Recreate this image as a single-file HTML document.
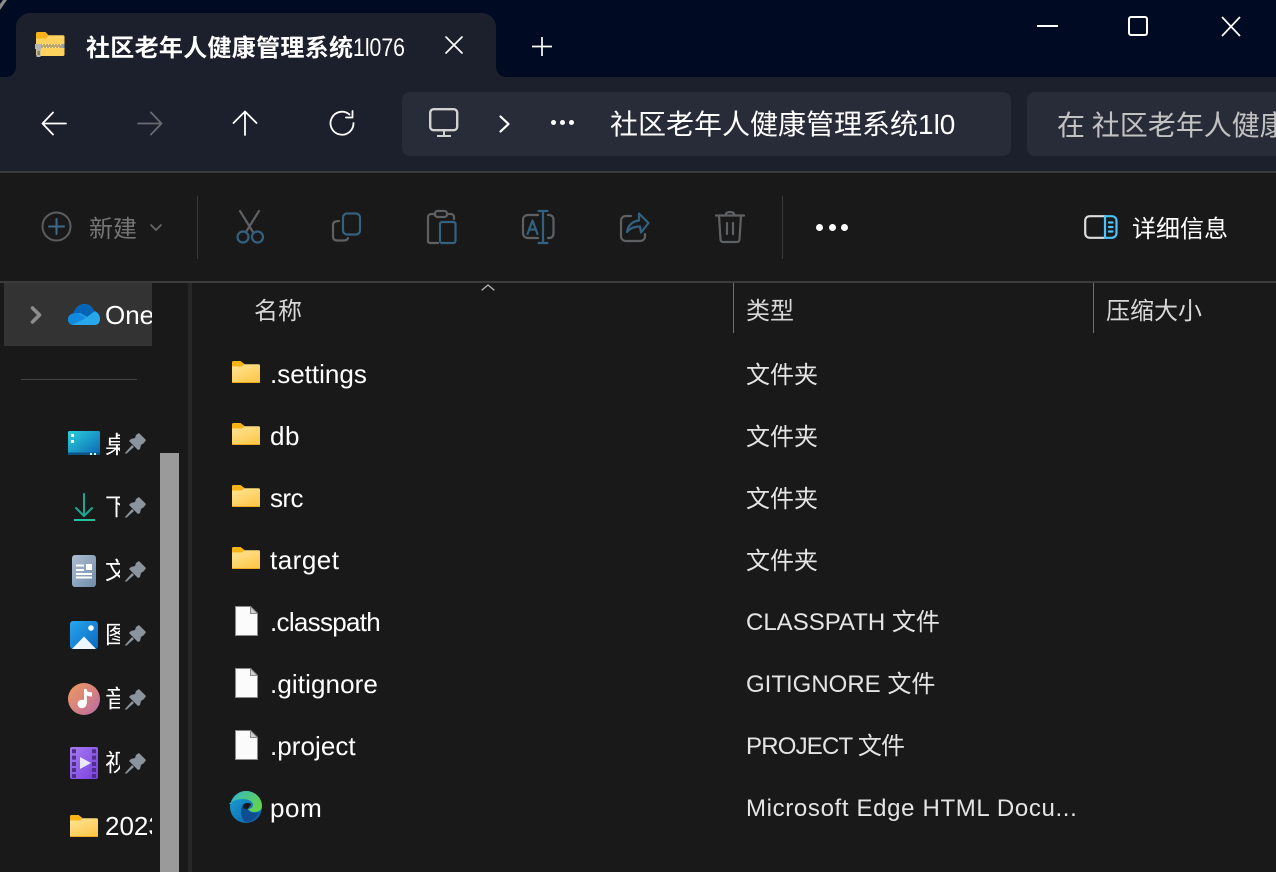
<!DOCTYPE html>
<html lang="zh"><head><meta charset="utf-8"><title>社区老年人健康管理系统1l076</title>
<style>
html,body{margin:0;padding:0;background:#191919}
#r{position:relative;width:1276px;height:872px;overflow:hidden;background:#191919;font-family:"Liberation Sans","Noto Sans CJK SC",sans-serif;color:#fff}
.a{position:absolute}
.t{position:absolute;white-space:nowrap;line-height:36px;height:36px}
.n{left:270px;font-size:26px;color:#fff}
.y{left:746px;font-size:24px;color:#e4e4e4}
.c{font-size:24px;color:#d8d8d8;top:294px}
svg{position:absolute;overflow:visible}
.s{fill:none;stroke-linecap:round;stroke-linejoin:round}
</style></head><body><div id="r">
<svg width="0" height="0" style="left:0;top:0"><defs>
<linearGradient id="fg" x1="0" y1="0" x2=".6" y2="1"><stop offset="0" stop-color="#ffe596"/><stop offset="1" stop-color="#fdc94f"/></linearGradient>
<symbol id="folder" viewBox="0 0 28 22"><path d="M0 4.500A1.500 1.500 0 0 1 1.500 3.200h25A1.500 1.500 0 0 1 28 4.700v15.800a1.500 1.500 0 0 1-1.500 1.500h-25A1.500 1.500 0 0 1 0 20.500z" fill="url(#fg)"/><path d="M0 1.500A1.500 1.500 0 0 1 1.500 0h7l4 3-2.500 2.500H0z" fill="#f8b417"/><path d="M0 21h28v.5a.5.5 0 0 1-.5.5H.5a.5.5 0 0 1-.5-.5z" fill="#eda81f"/></symbol>
<symbol id="file" viewBox="0 0 23 30"><path d="M.5.500h15l7 7v22H.5z" fill="#fbfbfb" stroke="#8a8a8a"/><path d="M15.500.500v7h7z" fill="#d0d0d0" stroke="#8a8a8a"/></symbol>
<symbol id="pin" viewBox="0 0 21 21"><path d="M11 2l3-2 7 7-2 3-3 2-1 4-2 1-9-9 2-2 4-1z" fill="#8b949c"/><path d="M7 12L0 20l1 1 8-7z" fill="#8b949c"/></symbol>
</defs></svg>

<!-- title bar -->
<div class="a" style="left:0;top:0;width:1276px;height:77px;background:#000a22"></div>
<!-- nav band -->
<div class="a" style="left:0;top:77px;width:1276px;height:94px;background:#1c202c"></div>
<!-- tab -->
<div class="a" style="left:16px;top:13px;width:480px;height:64px;background:#1c202c;border-radius:14px 14px 0 0"></div>
<svg width="12" height="12" style="left:4px;top:65px"><path d="M12 0v12H0c8 0 12-4 12-12z" fill="#1c202c"/></svg>
<svg width="12" height="12" style="left:496px;top:65px"><path d="M0 0v12h12C4 12 0 8 0 0z" fill="#1c202c"/></svg>

<!-- tab icon -->
<svg width="30" height="26" viewBox="0 0 30 26" style="left:35px;top:32px">
<path d="M1 4.500A1.500 1.500 0 0 1 2.500 3.200h25.500a1.500 1.500 0 0 1 1.500 1.500v17.800a1.500 1.500 0 0 1-1.500 1.500H2.500A1.500 1.500 0 0 1 1 22.500z" fill="#fdd25f"/>
<path d="M1 1.500A1.500 1.500 0 0 1 2.500 0h8l3 3.200-2 3.300H1z" fill="#f9b31a"/>
<rect x="5" y="12" width="24" height="4" fill="#bfa765"/><path d="M7 12h1v1H7zm3 0h1v1h-1zm3 0h1v1h-1zm3 0h1v1h-1zm3 0h1v1h-1zm3 0h1v1h-1zm3 0h1v1h-1zm-17 3h1v1H8zm3 0h1v1h-1zm3 0h1v1h-1zm3 0h1v1h-1zm3 0h1v1h-1zm3 0h1v1h-1z" fill="#f0e8c8"/>
<rect x="26.500" y="12" width="3" height="4" fill="#8fa0a8"/>
<path d="M0 12h6v5H5.500v8h-4v-8H0z" fill="#b4b4b0"/><rect x="2.500" y="19" width="2.500" height="4" fill="#7e7e7a"/>
</svg>
<div class="t" style="left:86px;top:30px;font-size:24px;font-weight:700;letter-spacing:.3px;width:320px">社区老年人健康管理系统<span style="display:inline-block;font-weight:400;letter-spacing:0;font-size:25px;transform:scaleX(.85);transform-origin:0 50%">1l076</span></div>
<svg class="s" width="18" height="18" style="left:445px;top:36px" stroke="#fff" stroke-width="1.7"><path d="M1 1l16 16M17 1L1 17"/></svg>
<svg class="s" width="20" height="20" style="left:532px;top:37px" stroke="#fff" stroke-width="1.7"><path d="M10 0v19M0 9.500h20" stroke-linecap="butt"/></svg>

<!-- window controls -->
<div class="a" style="left:1037px;top:25px;width:21px;height:2px;background:#fff"></div>
<div class="a" style="left:1128px;top:16px;width:16px;height:16px;border:2px solid #fff;border-radius:3px"></div>
<svg class="s" width="20" height="20" style="left:1221px;top:16px" stroke="#fff" stroke-width="1.7"><path d="M1 1l18 19M19 1L1 20" stroke-linecap="butt"/></svg>
<svg width="10" height="12" style="left:0;top:0"><path d="M0 10L7 0H3L0 4z" fill="#8a8a8a"/></svg>

<!-- nav icons -->
<svg class="s" width="26" height="24" style="left:41px;top:111px" stroke="#fff" stroke-width="1.8"><path d="M25 12.500H2M12 1.500L1.500 12.500 12 23.500"/></svg>
<svg class="s" width="26" height="24" style="left:137px;top:111px" stroke="#686a70" stroke-width="1.8"><path d="M1 12.500h23M14 1.500l10.500 11L14 23.500"/></svg>
<svg class="s" width="26" height="26" style="left:232px;top:110px" stroke="#fff" stroke-width="1.8"><path d="M13 25V2M1.500 13L13 1.500 24.500 13"/></svg>
<svg class="s" width="26" height="26" style="left:329px;top:110px" stroke="#fff" stroke-width="1.8"><path d="M20.500 4.500A11.500 11.500 0 1 0 24.500 13M23.500 1v6.500H17"/></svg>

<!-- address -->
<div class="a" style="left:402px;top:92px;width:609px;height:64px;background:#282c38;border-radius:8px"></div>
<div class="a" style="left:1027px;top:92px;width:260px;height:64px;background:#282c38;border-radius:8px"></div>
<svg class="s" width="30" height="30" style="left:429px;top:108px" stroke="#d2d2d2" stroke-width="2.400"><rect x="1.200" y="1.200" width="27" height="21" rx="3.500"/><path d="M15 22.500v5M8 28h14" stroke-width="2" stroke-linecap="butt"/></svg>
<svg class="s" width="12" height="20" style="left:499px;top:115px" stroke="#fff" stroke-width="2.200"><path d="M1.500 1.500L9.500 9 1.500 16.500"/></svg>
<div class="a" style="left:551px;top:120px;width:5px;height:5px;border-radius:50%;background:#fff"></div>
<div class="a" style="left:560px;top:120px;width:5px;height:5px;border-radius:50%;background:#fff"></div>
<div class="a" style="left:569px;top:120px;width:5px;height:5px;border-radius:50%;background:#fff"></div>
<div class="t" style="left:610px;top:106px;font-size:28px;line-height:38px;height:38px;color:#fff">社区老年人健康管理系统<span style="font-size:28px">1l0</span></div>
<div class="a" style="left:1057px;top:107px;width:219px;height:40px;overflow:hidden"><div class="t" style="left:0;top:0;font-size:28px;line-height:38px;height:38px;color:#c2c2c2;word-spacing:-1px">在 社区老年人健康管理系统</div></div>

<!-- command bar -->
<div class="a" style="left:0;top:171px;width:1276px;height:2px;background:#3c3c3c"></div>
<div class="a" style="left:0;top:281px;width:1276px;height:2px;background:#3c3c3c"></div>
<svg class="s" width="32" height="32" style="left:41px;top:211px" stroke="#5a5d60" stroke-width="2"><circle cx="15.500" cy="15.500" r="14"/><path d="M15.500 8v15M8 15.500h15" stroke="#3d6a86"/></svg>
<div class="t" style="left:89px;top:212px;font-size:24px;color:#747474">新建</div>
<svg class="s" width="12" height="8" style="left:150px;top:224px" stroke="#6a6a6a" stroke-width="1.600"><path d="M1 1l5 5 5-5"/></svg>
<div class="a" style="left:197px;top:196px;width:1px;height:63px;background:#3a3a3a"></div>
<svg class="s" width="30" height="34" style="left:235px;top:210px" stroke-width="2.200"><path d="M5 1l13 21M24 1L11 22" stroke="#5e6063"/><circle cx="8" cy="27" r="5.500" stroke="#33617f"/><circle cx="22.500" cy="27" r="5.500" stroke="#33617f"/></svg>
<svg class="s" width="30" height="34" style="left:332px;top:212px" stroke-width="2.200"><path d="M7 9C3 9 1 10.500 1 13v11c0 3 1.500 4.500 4 4.500h7c2 0 3.500-1 4-2.500" stroke="#5e6063"/><rect x="11" y="1.500" width="17" height="21" rx="4" stroke="#33617f"/></svg>
<svg class="s" width="30" height="34" style="left:427px;top:210px" stroke-width="2.200"><path d="M8 4H4C2.500 4 1 5.500 1 7v24c0 1.500 1 2 2.500 2H11" stroke="#5e6063"/><path d="M20 4h4c1.500 0 3 1.500 3 3v2" stroke="#5e6063"/><rect x="8" y="1" width="12" height="6" rx="2.500" stroke="#5e6063"/><rect x="13" y="12" width="15.500" height="21" rx="2" stroke="#33617f"/></svg>
<svg class="s" width="34" height="34" style="left:522px;top:210px" stroke-width="2.200"><path d="M16 5H6C3 5 1 7 1 10v13c0 3 2 5 5 5h10M26 5h1c3 0 4.500 2 4.500 5v13c0 3-1.500 5-4.500 5h-1" stroke="#5e6063"/><path d="M16.500 1h9M21 1v32M16.500 33h9" stroke="#33617f"/><path d="M5.500 24L10.500 10.500l5 13.500M7.500 19.500h6" stroke="#33617f"/></svg>
<svg class="s" width="34" height="32" style="left:620px;top:212px" stroke-width="2.200"><path d="M11 4H6C3 4 1 6 1 9v15c0 3 2 5 5 5h14c3 0 5-2 5-5v-2" stroke="#5e6063"/><path d="M7 20c1-7 6-11 12-11.500V1.500l9.500 9.500-7.500 9.500-1-6c-6 0-10 1.500-13 5.500z" stroke="#33617f"/></svg>
<svg class="s" width="30" height="34" style="left:715px;top:211px" stroke="#5e6063" stroke-width="2.200"><path d="M1 4.500h28M4 4.500l1.500 24c.2 1.500 1 2.500 2.500 2.500h14c1.500 0 2.300-1 2.500-2.500L26 4.500M10.500 4.500c0-2.500 2-3.500 4.500-3.500s4.500 1 4.500 3.500M12 12v11M18 12v11"/></svg>
<div class="a" style="left:782px;top:196px;width:1px;height:63px;background:#3a3a3a"></div>
<div class="a" style="left:816px;top:224px;width:7px;height:7px;border-radius:50%;background:#fff"></div>
<div class="a" style="left:829px;top:224px;width:7px;height:7px;border-radius:50%;background:#fff"></div>
<div class="a" style="left:841px;top:224px;width:7px;height:7px;border-radius:50%;background:#fff"></div>
<svg class="s" width="34" height="24" style="left:1084px;top:215px" stroke-width="2.200"><path d="M21 1.200H6C3 1.200 1.200 3 1.200 6v12C1.200 21 3 22.800 6 22.800h15" stroke="#dcdcdc"/><path d="M21 1.200h6.500c3 0 5 2 5 5v11.600c0 3-2 5-5 5H21z" stroke="#4cc2ff"/><path d="M25 7.500h3.500M25 12h3.500M25 16.500h3.500" stroke="#4cc2ff"/></svg>
<div class="t" style="left:1132px;top:212px;font-size:24px;color:#fff">详细信息</div>

<!-- sidebar -->
<div class="a" style="left:4px;top:283px;width:148px;height:63px;background:#333"></div>
<svg class="s" width="12" height="20" style="left:30px;top:305px" stroke="#8c8c8c" stroke-width="3.600"><path d="M2.500 3l7 7-7 7"/></svg>
<svg width="32" height="21" viewBox="0 0 32 21" style="left:68px;top:304px"><defs><clipPath id="cl"><path d="M5.500 21C2 21 0 18.500 0 15.500 0 12.500 2 10 5.500 9.500 7 4 11 0 16.500 0 21 0 24.500 3 26 7c3.500.5 6 4 6 8 0 3.500-2 6-5 6z"/></clipPath></defs><g clip-path="url(#cl)"><rect width="32" height="21" fill="#28a8ea"/><path d="M0 0h32v9l-5-2-8 6-7-4-12 1z" fill="#0364b8"/><path d="M0 9h10l8 5-14 7-4-3z" fill="#0f8adf"/></g></svg>
<div class="a" style="left:105px;top:297px;width:47px;height:40px;overflow:hidden"><div class="t" style="left:0;top:0;font-size:26px;color:#fff">OneDrive</div></div>
<div class="a" style="left:21px;top:379px;width:116px;height:1px;background:#444"></div>
<div class="a" style="left:188px;top:283px;width:4px;height:589px;background:#262626"></div>
<div class="a" style="left:160px;top:453px;width:19px;height:419px;background:#9a9a9a"></div>

<svg width="32" height="24" viewBox="0 0 32 24" style="left:68px;top:431px"><defs><linearGradient id="dg" x1="0" y1="0" x2="1" y2="1"><stop offset="0" stop-color="#2ad0dd"/><stop offset="1" stop-color="#0d66b5"/></linearGradient></defs><rect width="32" height="24" rx="1.500" fill="url(#dg)"/><rect y="21.500" width="32" height="2.500" fill="#0c5486"/><rect x="3" y="3" width="3" height="3" fill="#fff"/><rect x="3" y="9" width="3" height="3" fill="#fff"/><rect x="22" y="22" width="2" height="2" fill="#cfe"/><rect x="26" y="22" width="2" height="2" fill="#cfe"/></svg>
<svg class="s" width="24" height="28" style="left:73px;top:493px" stroke-width="2"><path d="M11 1v22M3 15l8 8 8-8" stroke="#1ea891"/><path d="M1 27h21" stroke="#25c2a0" stroke-linecap="butt"/></svg>
<svg width="24" height="32" viewBox="0 0 24 32" style="left:72px;top:555px"><defs><linearGradient id="dc" x1="0" y1="0" x2="1" y2="1"><stop offset="0" stop-color="#aebed0"/><stop offset="1" stop-color="#6e8cab"/></linearGradient></defs><rect width="24" height="32" rx="3" fill="url(#dc)"/><path d="M4 9.500h8v2H4zM4 14h8v2H4zM4 18h16v2H4zM4 21.500h16v2H4z" fill="#fff"/><rect x="14" y="9" width="6" height="6" fill="#fff"/></svg>
<svg width="28" height="28" viewBox="0 0 28 28" style="left:70px;top:621px"><defs><linearGradient id="pg" x1="0" y1="0" x2="1" y2="1"><stop offset="0" stop-color="#27a6ee"/><stop offset="1" stop-color="#0a67bf"/></linearGradient></defs><rect width="28" height="28" rx="3" fill="url(#pg)"/><circle cx="21" cy="7" r="2.800" fill="#fff"/><path d="M2 28L14 15.500 26 28z" fill="#eef7ff"/></svg>
<svg width="32" height="32" viewBox="0 0 32 32" style="left:68px;top:683px"><defs><linearGradient id="mg" x1="0" y1="0" x2="1" y2="1"><stop offset="0" stop-color="#f29a5a"/><stop offset="1" stop-color="#b96aa6"/></linearGradient></defs><circle cx="16" cy="16" r="16" fill="url(#mg)"/><ellipse cx="14" cy="21" rx="4.500" ry="4.200" fill="#fff"/><path d="M16 6h2.800v15H16z" fill="#fff"/><path d="M16 6c2 2 4 3 8 3.500v4c-3 0-6-1-8-3z" fill="#fff"/></svg>
<svg width="28" height="32" viewBox="0 0 28 32" style="left:70px;top:747px"><defs><linearGradient id="vg" x1="0" y1="0" x2="1" y2="1"><stop offset="0" stop-color="#a67cf0"/><stop offset="1" stop-color="#7a3fe0"/></linearGradient></defs><rect width="28" height="32" rx="2" fill="url(#vg)"/><path d="M2 2.300h4v4H2zM2 8.600h4v4H2zM2 15h4v4H2zM2 21h4v4H2zM2 27h4v4H2zM22 2.300h4v4h-4zM22 8.600h4v4h-4zM22 15h4v4h-4zM22 21h4v4h-4zM22 27h4v4h-4z" fill="#4f2f8a"/><path d="M10 10l11 6-11 6z" fill="#ece8fb"/></svg>
<svg width="28" height="22" style="left:70px;top:815px"><use href="#folder" width="28" height="22"/></svg>

<div class="a" style="left:105px;top:428px;width:15px;height:36px;overflow:hidden"><div class="t" style="left:0;top:0;font-size:24px;color:#fff">桌面</div></div>
<div class="a" style="left:105px;top:490px;width:15px;height:36px;overflow:hidden"><div class="t" style="left:0;top:0;font-size:24px;color:#fff">下载</div></div>
<div class="a" style="left:105px;top:554px;width:15px;height:36px;overflow:hidden"><div class="t" style="left:0;top:0;font-size:24px;color:#fff">文档</div></div>
<div class="a" style="left:105px;top:618px;width:15px;height:36px;overflow:hidden"><div class="t" style="left:0;top:0;font-size:24px;color:#fff">图片</div></div>
<div class="a" style="left:105px;top:682px;width:15px;height:36px;overflow:hidden"><div class="t" style="left:0;top:0;font-size:24px;color:#fff">音乐</div></div>
<div class="a" style="left:105px;top:746px;width:15px;height:36px;overflow:hidden"><div class="t" style="left:0;top:0;font-size:24px;color:#fff">视频</div></div>
<div class="a" style="left:105px;top:808px;width:47px;height:38px;overflow:hidden"><div class="t" style="left:0;top:0;font-size:26px;color:#fff">2023</div></div>

<svg width="21" height="21" style="left:125px;top:433px"><use href="#pin" width="21" height="21"/></svg>
<svg width="21" height="21" style="left:125px;top:497px"><use href="#pin" width="21" height="21"/></svg>
<svg width="21" height="21" style="left:125px;top:561px"><use href="#pin" width="21" height="21"/></svg>
<svg width="21" height="21" style="left:125px;top:625px"><use href="#pin" width="21" height="21"/></svg>
<svg width="21" height="21" style="left:125px;top:689px"><use href="#pin" width="21" height="21"/></svg>
<svg width="21" height="21" style="left:125px;top:753px"><use href="#pin" width="21" height="21"/></svg>

<!-- headers -->
<svg class="s" width="14" height="7" style="left:481px;top:284px" stroke="#b8b8b8" stroke-width="1.200"><path d="M1 6l6-5 6 5"/></svg>
<div class="t c" style="left:254px">名称</div>
<div class="t c" style="left:746px">类型</div>
<div class="t c" style="left:1106px">压缩大小</div>
<div class="a" style="left:733px;top:283px;width:1px;height:50px;background:#6e6e6e"></div>
<div class="a" style="left:1093px;top:283px;width:1px;height:50px;background:#6e6e6e"></div>

<!-- rows -->
<svg width="28" height="22" style="left:232px;top:361px"><use href="#folder" width="28" height="22"/></svg>
<svg width="28" height="22" style="left:232px;top:423px"><use href="#folder" width="28" height="22"/></svg>
<svg width="28" height="22" style="left:232px;top:485px"><use href="#folder" width="28" height="22"/></svg>
<svg width="28" height="22" style="left:232px;top:547px"><use href="#folder" width="28" height="22"/></svg>
<svg width="23" height="30" style="left:235px;top:606px"><use href="#file" width="23" height="30"/></svg>
<svg width="23" height="30" style="left:235px;top:668px"><use href="#file" width="23" height="30"/></svg>
<svg width="23" height="30" style="left:235px;top:730px"><use href="#file" width="23" height="30"/></svg>
<svg width="32" height="32" viewBox="0 0 32 32" style="left:230px;top:791px"><defs><linearGradient id="e1" x1="0" y1="0" x2="1" y2="1"><stop offset="0" stop-color="#1aa5d8"/><stop offset="1" stop-color="#0c59a4"/></linearGradient><linearGradient id="e2" x1="0" y1="0" x2="1" y2=".6"><stop offset="0" stop-color="#30b5cf"/><stop offset="1" stop-color="#63d44e"/></linearGradient></defs><circle cx="16" cy="16" r="16" fill="url(#e1)"/><path d="M1 13C3 5 9 0 16 0c9 0 16 7 16 15 0 4-3 6-7 6-3 0-6-1-7-3 3 0 5-2 5-4 0-3-4-6-10-6-6 0-11 2-14 5z" fill="url(#e2)"/><path d="M11 20c0-5 3-8 7-8 2 0 3 1 3 2 0 1-2 2-3 4 1 4 6 5 11 3-2 5-7 10-12 10-4 0-6-6-6-11z" fill="#0f4d92"/><path d="M18 12c-3 0-5 1-5 3s2 3 3 3c2 0 3-1 3-2 1-1 2-2 2-2 0-1-1-2-3-2z" fill="#191919"/></svg>

<div class="t n" style="top:356px">.settings</div>
<div class="t n" style="top:418px;letter-spacing:.5px">db</div>
<div class="t n" style="top:480px;letter-spacing:-.6px">src</div>
<div class="t n" style="top:542px;letter-spacing:.5px">target</div>
<div class="t n" style="top:604px;letter-spacing:-.7px">.classpath</div>
<div class="t n" style="top:666px;letter-spacing:.1px">.gitignore</div>
<div class="t n" style="top:728px;letter-spacing:.05px">.project</div>
<div class="t n" style="top:790px;letter-spacing:.6px">pom</div>

<div class="t y" style="top:358px">文件夹</div>
<div class="t y" style="top:420px">文件夹</div>
<div class="t y" style="top:482px">文件夹</div>
<div class="t y" style="top:544px">文件夹</div>
<div class="t y" style="top:605px">CLASSPATH 文件</div>
<div class="t y" style="top:667px">GITIGNORE 文件</div>
<div class="t y" style="top:729px;letter-spacing:-.8px">PROJECT 文件</div>
<div class="t y" style="top:791px;letter-spacing:.65px">Microsoft Edge HTML Docu...</div>
</div></body></html>
